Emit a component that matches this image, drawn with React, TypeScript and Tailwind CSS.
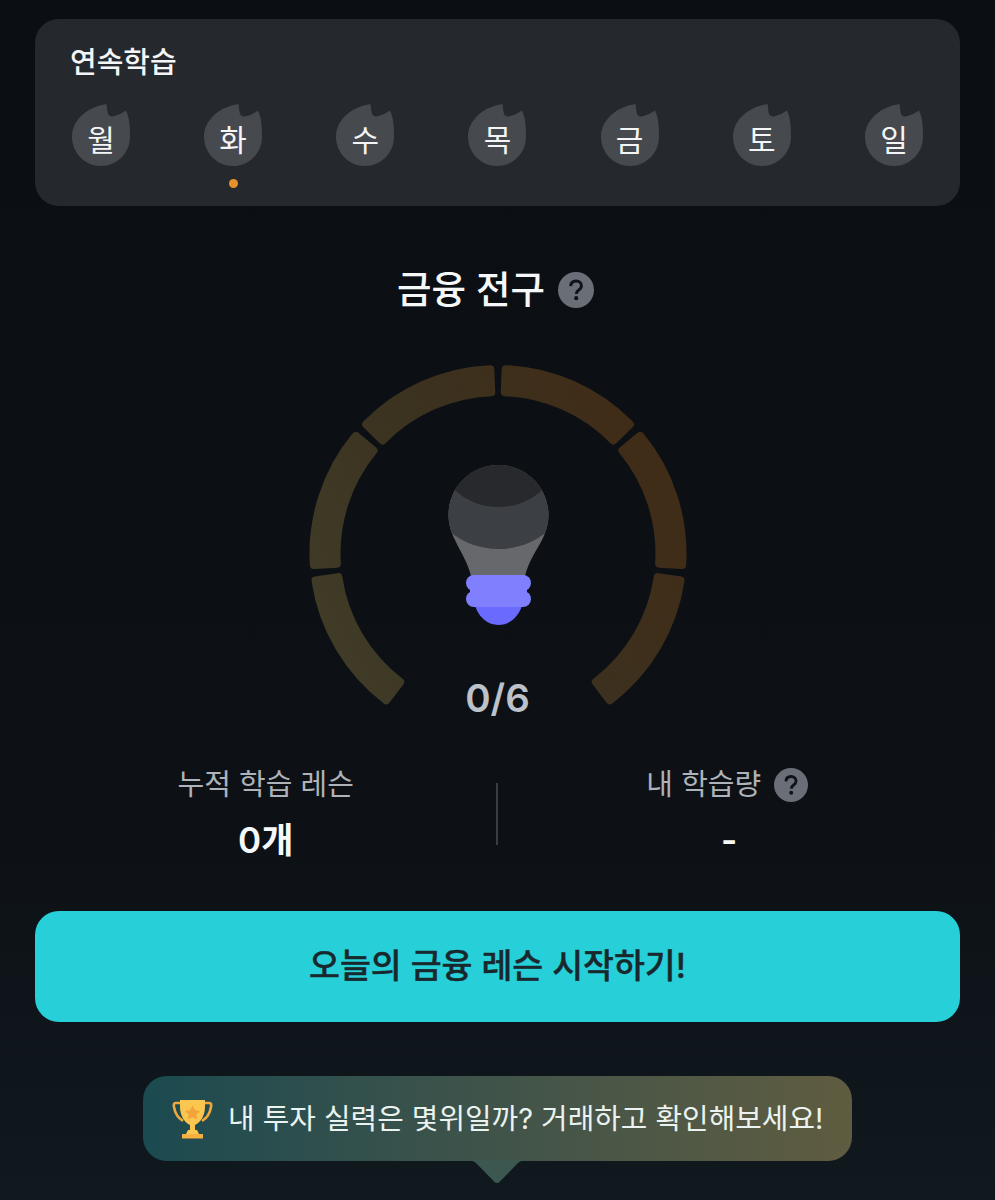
const font = { fontFamily: 'Inter, "Noto Sans CJK KR", sans-serif' };

const DAYS = ['월', '화', '수', '목', '금', '토', '일'];

function Flame({ label, today }: { label: string; today?: boolean }) {
  return (
    <div className="flex flex-col items-center gap-[13px] w-[58px]">
      <div className="relative w-[58px] h-[62px]">
        <svg width="58" height="62" viewBox="0 0 58 62" className="block">
          <path
            d="M34.5 0 L35.5 8 Q36.5 13 41 12.5 Q48 11 54 6.5 C57 13 58 20 58 33 C58 49 45 62 29 62 C13 62 0 49 0 33 C0 16 15 3 34.5 0Z"
            fill="#46494d"
          />
        </svg>
        <span className="absolute inset-0 flex items-center justify-center pt-[9px] text-[30px] leading-[36px] text-[#f4f5f6]">
          {label}
        </span>
      </div>
      {today && <div className="w-[9px] h-[9px] rounded-full bg-[#e8902a]" />}
    </div>
  );
}

function Help({ size }: { size: number }) {
  return (
    <svg width={size} height={size} viewBox="0 0 36 36" className="block shrink-0">
      <circle cx="18" cy="18" r="18" fill="#6a6e76" />
      <path
        d="M12.6 14.2 C12.8 10.8 15 9 18.1 9 C21.2 9 23.4 10.9 23.4 13.7 C23.4 15.7 22.4 16.9 20.8 18 C19.2 19.1 18.4 19.9 18.3 21.9"
        fill="none"
        stroke="#0f1318"
        strokeWidth="3"
      />
      <circle cx="18.2" cy="26.2" r="2.1" fill="#0f1318" />
    </svg>
  );
}

const CX = 200;
const CY = 193.5;

function pt(r: number, deg: number) {
  const a = (deg * Math.PI) / 180;
  return `${(CX + r * Math.sin(a)).toFixed(2)} ${(CY - r * Math.cos(a)).toFixed(2)}`;
}

function sector(start: number, end: number) {
  const ro = 184.5;
  const ri = 161.5;
  return `M${pt(ro, start)} A${ro} ${ro} 0 0 1 ${pt(ro, end)} L${pt(ri, end)} A${ri} ${ri} 0 0 0 ${pt(ri, start)} Z`;
}

const SEGMENTS = [
  [-142.7, -98.4],
  [-93.6, -50.4],
  [-45.6, -2.4],
  [2.4, 45.6],
  [50.4, 93.6],
  [98.4, 142.7],
];

function Gauge() {
  return (
    <div className="relative w-[400px] h-[350px] self-center">
      <svg width="400" height="350" viewBox="0 0 400 350" className="block">
        <defs>
          <linearGradient id="ring" gradientUnits="userSpaceOnUse" x1="30" y1="340" x2="390" y2="150">
            <stop offset="0" stopColor="#403d27" />
            <stop offset="0.5" stopColor="#3b3220" />
            <stop offset="1" stopColor="#402c17" />
          </linearGradient>
          <clipPath id="head">
            <path d="M150.5 155 C150.5 127.4 172.9 105 200.5 105 C228.1 105 250.5 127.4 250.5 155 C250.5 164 248 172 244 180 C238 191 230 203 227 216 H173 C170 203 162 191 157 180 C153 172 150.5 164 150.5 155Z" />
          </clipPath>
        </defs>
        {SEGMENTS.map(([a, b], i) => (
          <path
            key={i}
            d={sector(a, b)}
            fill="url(#ring)"
            stroke="url(#ring)"
            strokeWidth="8"
            strokeLinejoin="round"
          />
        ))}
        <g clipPath="url(#head)">
          <rect x="140" y="100" width="120" height="120" fill="#66686b" />
          <ellipse cx="200.5" cy="127" rx="70" ry="62" fill="#3c3f43" />
          <ellipse cx="200.5" cy="97" rx="58" ry="50" fill="#27292d" />
        </g>
        <path d="M176 242 H225 C222 256 212 265 200.5 265 C189 265 179 256 176 242Z" fill="#6a6aff" />
        <rect x="168" y="215" width="65" height="16" rx="8" fill="#8080ff" />
        <rect x="168" y="231" width="65" height="16" rx="8" fill="#8080ff" />
        <rect x="172" y="219" width="57" height="24" fill="#8080ff" />
      </svg>
      <span className="absolute left-0 right-0 top-[316px] text-center text-[38.5px] leading-[44px] font-semibold text-[#bcc2c9]">
        0/6
      </span>
    </div>
  );
}

function Trophy() {
  return (
    <svg width="41" height="40" viewBox="0 0 41 40" className="block shrink-0">
      <path
        d="M9 4 H3.5 C2 4 1.5 5.5 2 8 C3 14 6 19 11 22"
        fill="none"
        stroke="#f0a83c"
        strokeWidth="2.6"
      />
      <path
        d="M32 4 H37.5 C39 4 39.5 5.5 39 8 C38 14 35 19 30 22"
        fill="none"
        stroke="#f0a83c"
        strokeWidth="2.6"
      />
      <path d="M8 1 H33 V8 C33 17 28 24 23 26 V31 H18 V26 C13 24 8 17 8 8Z" fill="#fbc64f" />
      <path d="M16 31 H25 L27 35 H14Z" fill="#fbc64f" />
      <rect x="10" y="35" width="21" height="4.5" rx="0.5" fill="#f5b041" />
      <path
        d="M20.5 6.5 L23 11.3 L28 12 L24.3 15.6 L25.3 20.6 L20.5 18.2 L15.7 20.6 L16.7 15.6 L13 12 L18 11.3Z"
        fill="#f2a33a"
      />
    </svg>
  );
}

export default function App() {
  return (
    <div
      className="w-full h-[1200px] overflow-hidden flex flex-col px-[35px] pt-[19px] bg-linear-to-b from-[#0b0f14] via-[#0d1116] via-70% to-[#10191e]"
      style={font}
    >
      <section className="h-[187px] rounded-[24px] bg-[#25282d] px-[37px] pt-[26px]">
        <h2 className="-ml-[2px] text-[29px] leading-[36px] font-medium text-[#f4f5f6]">연속학습</h2>
        <div className="mt-[23px] flex justify-between items-start">
          {DAYS.map((d, i) => (
            <Flame key={d} label={d} today={i === 1} />
          ))}
        </div>
      </section>

      <div className="mt-[64px] h-[40px] flex items-center justify-center gap-[13px] pr-[4px]">
        <h1 className="text-[37.5px] leading-[40px] font-medium text-[#f6f7f8]">금융 전구</h1>
        <Help size={36} />
      </div>

      <div className="mt-[50px] flex flex-col">
        <Gauge />
      </div>

      <div className="mt-[57px] flex items-start">
        <div className="flex-1 flex flex-col items-center">
          <div className="h-[36px] flex items-center text-[29px] leading-[36px] text-[#aeb3b9]">누적 학습 레슨</div>
          <div className="mt-[19px] h-[36px] flex items-center text-[35px] leading-[36px] font-semibold text-[#f6f7f8]">
            0개
          </div>
        </div>
        <div className="w-[2px] h-[62px] mt-[16px] -ml-px mr-px bg-[#3a3d42]" />
        <div className="flex-1 flex flex-col items-center">
          <div className="h-[36px] flex items-center gap-[13px] pr-[4px] text-[29px] leading-[36px] text-[#aeb3b9]">
            내 학습량
            <Help size={34} />
          </div>
          <div className="mt-[19px] h-[36px] flex items-center text-[35px] leading-[36px] font-semibold text-[#f6f7f8]">
            -
          </div>
        </div>
      </div>

      <button className="mt-[53px] h-[111px] shrink-0 rounded-[24px] bg-[#27d0d8] text-[33.6px] font-medium [-webkit-text-stroke:0.4px_#18282c] text-[#18282c]">
        오늘의 금융 레슨 시작하기!
      </button>

      <div className="relative mt-[54px] self-center w-[709px] h-[85px] shrink-0 rounded-[24px] bg-linear-to-r from-[#1a4a50] to-[#5f5c40] flex items-center pl-[29px] gap-[15px]">
        <Trophy />
        <span className="text-[28.9px] leading-[36px] whitespace-nowrap text-[#eaf3ef]">
          내 투자 실력은 몇위일까? 거래하고 확인해보세요!
        </span>
        <svg
          width="60"
          height="24"
          viewBox="0 0 60 24"
          className="absolute left-[324px] top-[84px] block"
        >
          <path d="M0 0 H60 C56 0 53 1 50 4 L33 21.5 C31 23.5 29 23.5 27 21.5 L10 4 C7 1 4 0 0 0Z" fill="#3c5650" />
        </svg>
      </div>
    </div>
  );
}
